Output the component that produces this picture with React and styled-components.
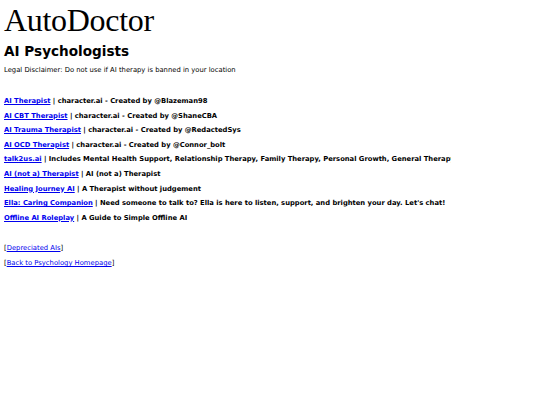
import React from "react";
import styled, { createGlobalStyle } from "styled-components";

const GlobalStyle = createGlobalStyle`
  html, body {
    margin: 0;
    padding: 0;
    background: #ffffff;
  }
  body {
    font-family: "DejaVu Sans", Verdana, sans-serif;
    color: #000000;
  }
`;

const Page = styled.div`
  padding: 3px 4px 0 4px;
  width: 443px;
  overflow: hidden;
`;

const Logo = styled.div`
  font-family: "Liberation Serif", "Times New Roman", serif;
  font-size: 32px;
  line-height: 34px;
  letter-spacing: -0.3px;
`;

const Title = styled.h1`
  margin: 5px 0 0 0;
  font-size: 13.6px;
  line-height: 18px;
  font-weight: bold;
`;

const Disclaimer = styled.p`
  margin: 5px 0 0 0;
  font-size: 6.8px;
  line-height: 10px;
`;

const List = styled.div`
  margin-top: 19px;
  display: flex;
  flex-direction: column;
`;

const Entry = styled.div`
  font-size: 6.78px;
  font-weight: bold;
  line-height: 14.6px;
  white-space: nowrap;
`;

const Link = styled.a`
  color: #0000ee;
  text-decoration: underline;
`;

const Footer = styled.div`
  margin-top: 16px;
  display: flex;
  flex-direction: column;
`;

const FooterLine = styled.div`
  font-size: 6.8px;
  line-height: 14.6px;
`;

const entries = [
  ["AI Therapist", "character.ai - Created by @Blazeman98"],
  ["AI CBT Therapist", "character.ai - Created by @ShaneCBA"],
  ["AI Trauma Therapist", "character.ai - Created by @RedactedSys"],
  ["AI OCD Therapist", "character.ai - Created by @Connor_bolt"],
  ["talk2us.ai", "Includes Mental Health Support, Relationship Therapy, Family Therapy, Personal Growth, General Therapy"],
  ["AI (not a) Therapist", "AI (not a) Therapist"],
  ["Healing Journey AI", "A Therapist without judgement"],
  ["Ella: Caring Companion", "Need someone to talk to? Ella is here to listen, support, and brighten your day. Let's chat!"],
  ["Offline AI Roleplay", "A Guide to Simple Offline AI"],
];

export default function App() {
  return (
    <>
      <GlobalStyle />
      <Page>
        <Logo>AutoDoctor</Logo>
        <Title>AI Psychologists</Title>
        <Disclaimer>Legal Disclaimer: Do not use if AI therapy is banned in your location</Disclaimer>
        <List>
          {entries.map(([name, desc]) => (
            <Entry key={name}>
              <Link href="#">{name}</Link> | {desc}
            </Entry>
          ))}
        </List>
        <Footer>
          <FooterLine>[<Link href="#">Depreciated AIs</Link>]</FooterLine>
          <FooterLine>[<Link href="#">Back to Psychology Homepage</Link>]</FooterLine>
        </Footer>
      </Page>
    </>
  );
}
